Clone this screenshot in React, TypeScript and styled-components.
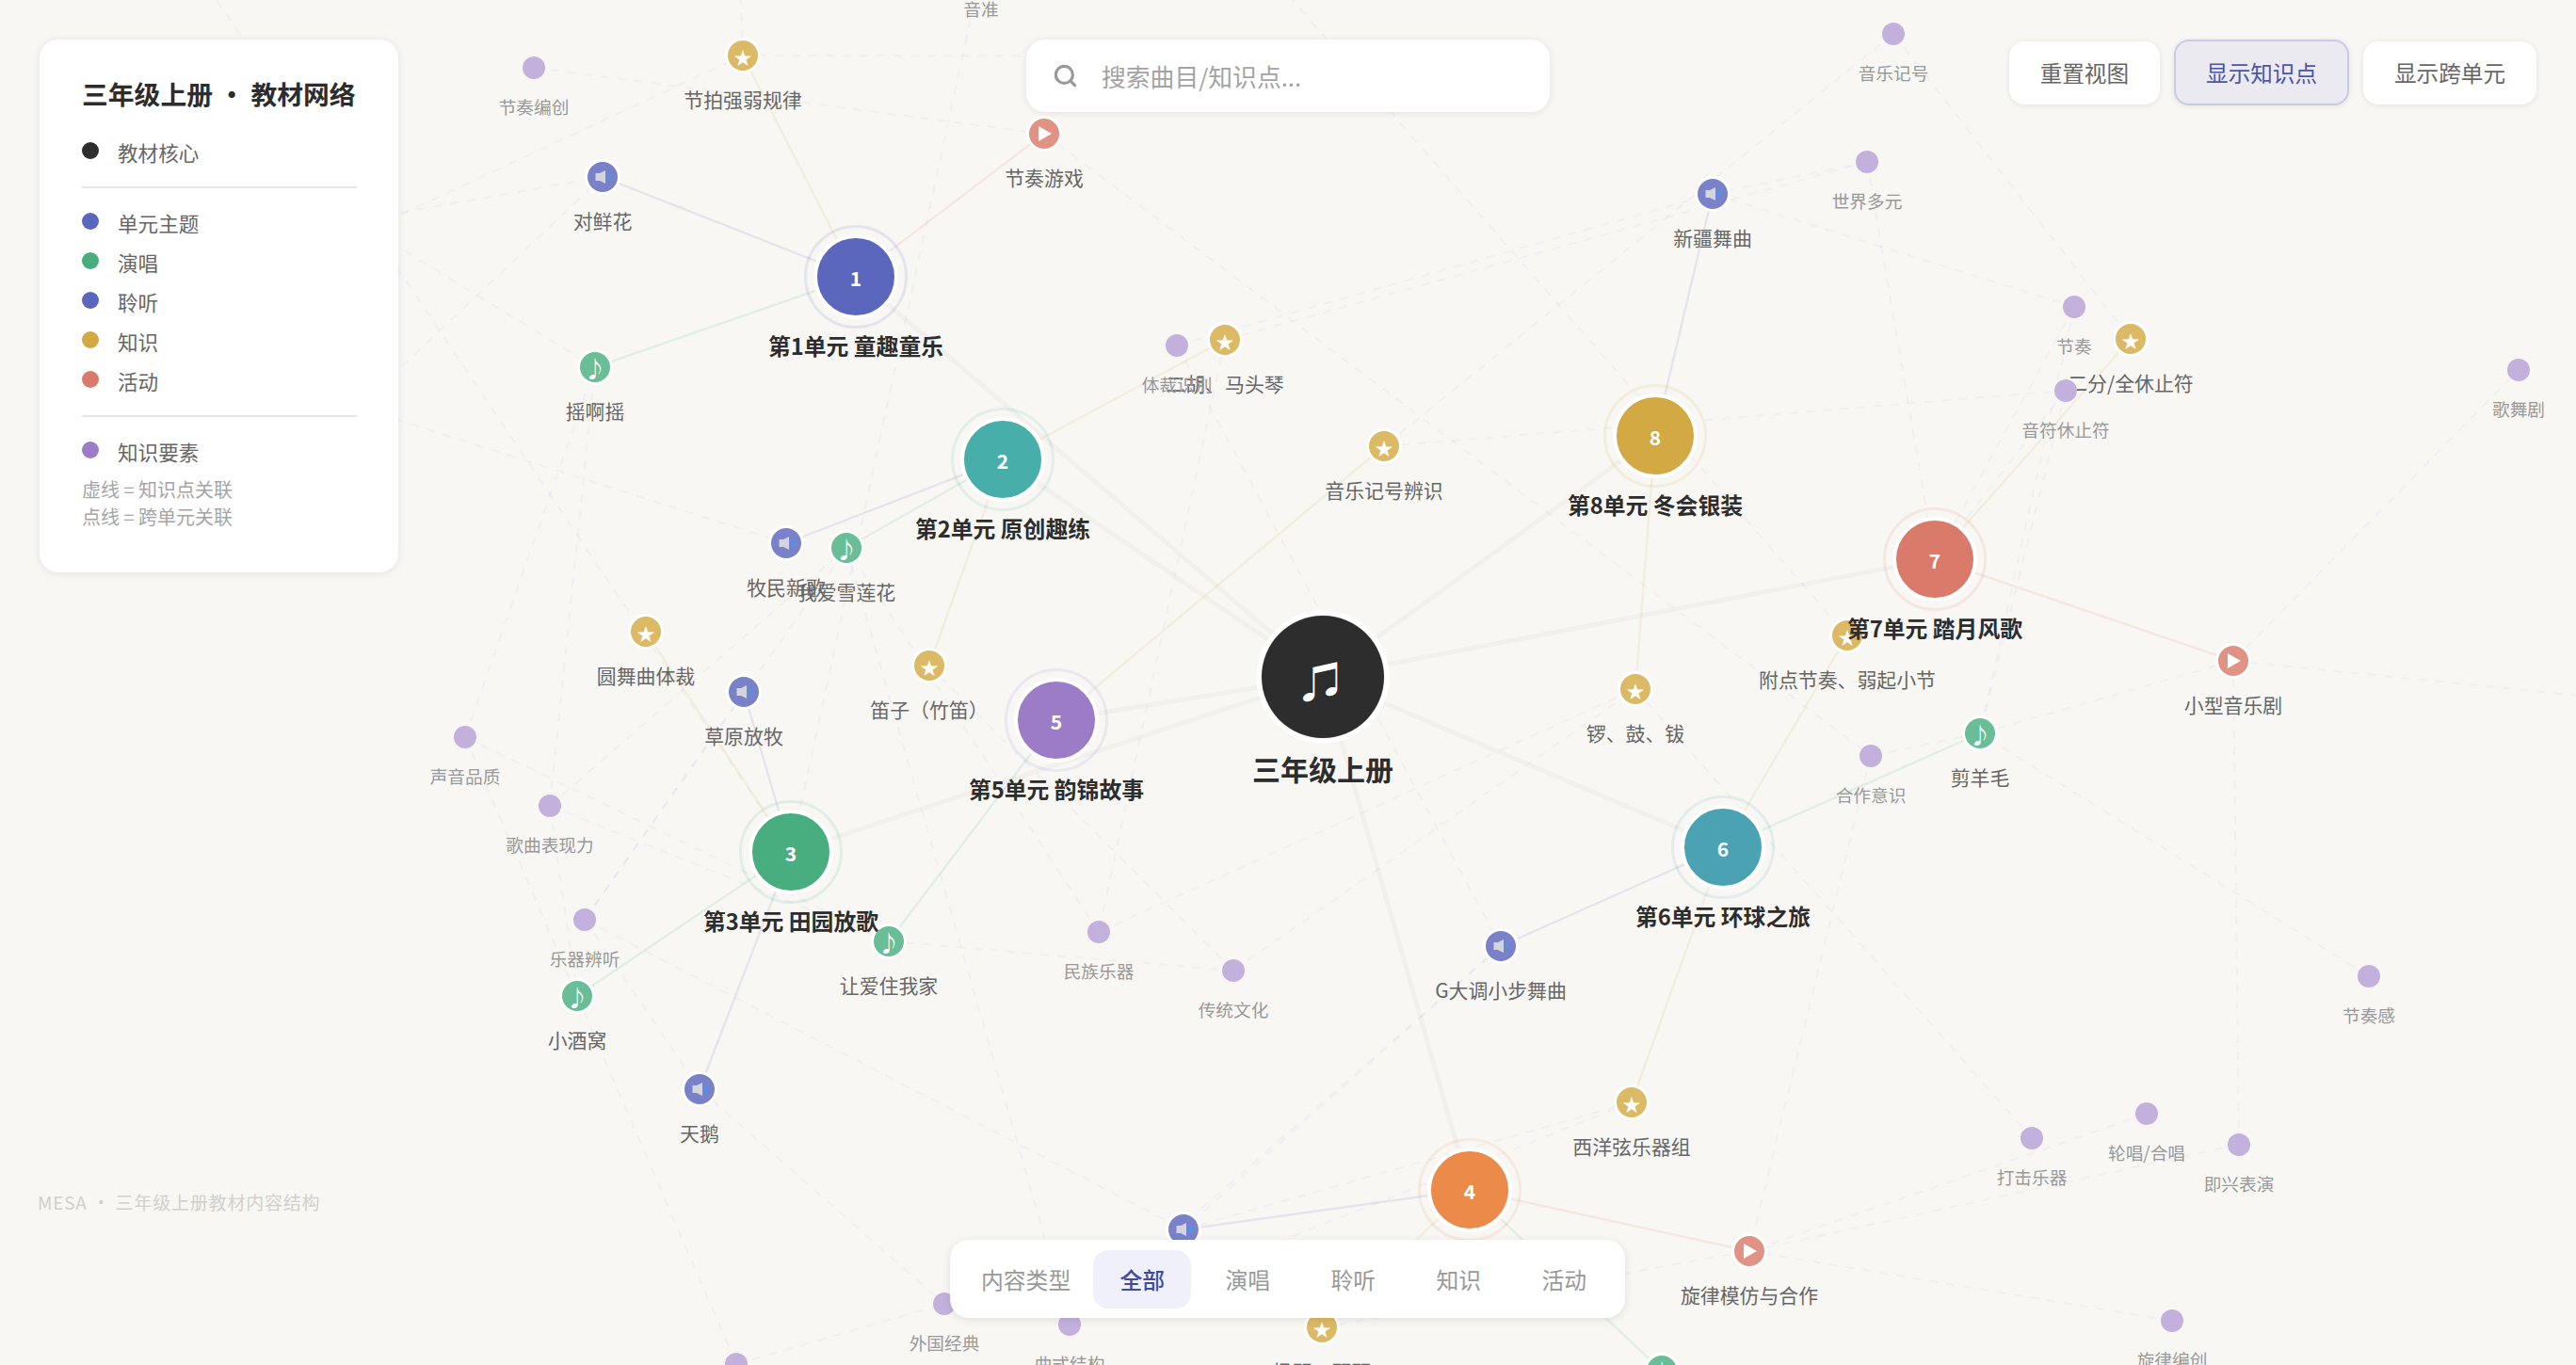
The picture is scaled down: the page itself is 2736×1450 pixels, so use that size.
import React from 'react';
import styled, { createGlobalStyle } from 'styled-components';
import { Search } from 'lucide-react';

type Kind = 'audio' | 'note' | 'star' | 'play' | 'idea';

interface Leaf {
  id: string;
  label?: string;
  x: number;
  y: number;
  kind: Kind;
  unit?: number;
}

const FONT = `"Noto Sans CJK SC", "Noto Sans", sans-serif`;

const CORE = { x: 1405, y: 719 };

const UNITS = [
  { n: 1, label: '第1单元 童趣童乐', x: 909, y: 294, color: '#5b67bd' },
  { n: 2, label: '第2单元 原创趣练', x: 1065, y: 488, color: '#48aeaa' },
  { n: 3, label: '第3单元 田园放歌', x: 840, y: 905, color: '#48ae80' },
  { n: 4, label: '第4单元', x: 1561, y: 1264, color: '#ec8a4a' },
  { n: 5, label: '第5单元 韵锦故事', x: 1122, y: 765, color: '#9c7cc6' },
  { n: 6, label: '第6单元 环球之旅', x: 1830, y: 900, color: '#4ba2b2' },
  { n: 7, label: '第7单元 踏月风歌', x: 2055, y: 594, color: '#d97a6a' },
  { n: 8, label: '第8单元 冬会银装', x: 1758, y: 463, color: '#d3a943' },
];

const KIND_COLOR: Record<Kind, string> = {
  audio: '#5b67bd',
  note: '#48ae80',
  star: '#d3a943',
  play: '#d97a6a',
  idea: '#9c7cc6',
};

const LEAVES: Leaf[] = [
  { id: 'duixianhua', label: '对鲜花', x: 640, y: 188, kind: 'audio', unit: 1 },
  { id: 'yaoayao', label: '摇啊摇', x: 632, y: 390, kind: 'note', unit: 1 },
  { id: 'jiepai', label: '节拍强弱规律', x: 789, y: 59, kind: 'star', unit: 1 },
  { id: 'jzgame', label: '节奏游戏', x: 1109, y: 142, kind: 'play', unit: 1 },
  { id: 'mumin', label: '牧民新歌', x: 835, y: 577, kind: 'audio', unit: 2 },
  { id: 'xuelian', label: '我爱雪莲花', x: 899, y: 582, kind: 'note', unit: 2 },
  { id: 'erhu', label: '二胡、马头琴', x: 1301, y: 361, kind: 'star', unit: 2 },
  { id: 'dizi', label: '笛子（竹笛）', x: 987, y: 707, kind: 'star', unit: 2 },
  { id: 'caoyuan', label: '草原放牧', x: 790, y: 735, kind: 'audio', unit: 3 },
  { id: 'xiaojiuwo', label: '小酒窝', x: 613, y: 1058, kind: 'note', unit: 3 },
  { id: 'tiane', label: '天鹅', x: 743, y: 1157, kind: 'audio', unit: 3 },
  { id: 'yuanwu', label: '圆舞曲体裁', x: 686, y: 671, kind: 'star', unit: 3 },
  { id: 'rangai', label: '让爱住我家', x: 944, y: 1000, kind: 'note', unit: 5 },
  { id: 'jihao', label: '音乐记号辨识', x: 1470, y: 474, kind: 'star', unit: 5 },
  { id: 'xinjiang', label: '新疆舞曲', x: 1819, y: 206, kind: 'audio', unit: 8 },
  { id: 'luogu', label: '锣、鼓、钹', x: 1737, y: 732, kind: 'star', unit: 8 },
  { id: 'erfen', label: '二分/全休止符', x: 2263, y: 360, kind: 'star', unit: 7 },
  { id: 'musical', label: '小型音乐剧', x: 2372, y: 702, kind: 'play', unit: 7 },
  { id: 'fudian', label: '附点节奏、弱起小节', x: 1962, y: 675, kind: 'star', unit: 6 },
  { id: 'jianyang', label: '剪羊毛', x: 2103, y: 779, kind: 'note', unit: 6 },
  { id: 'gmajor', label: 'G大调小步舞曲', x: 1594, y: 1005, kind: 'audio', unit: 6 },
  { id: 'xiyang', label: '西洋弦乐器组', x: 1733, y: 1171, kind: 'star', unit: 6 },
  { id: 'bottomaudio', x: 1257, y: 1306, kind: 'audio', unit: 4 },
  { id: 'yangqin', label: '扬琴、琵琶', x: 1404, y: 1410, kind: 'star', unit: 4 },
  { id: 'xuanlv', label: '旋律模仿与合作', x: 1858, y: 1329, kind: 'play', unit: 4 },
  { id: 'bottomnote', x: 1765, y: 1456, kind: 'note', unit: 4 },

  { id: 'bianchuang', label: '节奏编创', x: 567, y: 72, kind: 'idea' },
  { id: 'yinzhun', label: '音准', x: 1042, y: -32, kind: 'idea' },
  { id: 'ticai', label: '体裁识别', x: 1250, y: 367, kind: 'idea' },
  { id: 'jihaoidea', label: '音乐记号', x: 2011, y: 36, kind: 'idea' },
  { id: 'shijie', label: '世界多元', x: 1983, y: 172, kind: 'idea' },
  { id: 'jiezou', label: '节奏', x: 2203, y: 326, kind: 'idea' },
  { id: 'yinfu', label: '音符休止符', x: 2194, y: 415, kind: 'idea' },
  { id: 'gewu', label: '歌舞剧', x: 2675, y: 393, kind: 'idea' },
  { id: 'shengyin', label: '声音品质', x: 494, y: 783, kind: 'idea' },
  { id: 'biaoxian', label: '歌曲表现力', x: 584, y: 856, kind: 'idea' },
  { id: 'bianting', label: '乐器辨听', x: 621, y: 977, kind: 'idea' },
  { id: 'minzu', label: '民族乐器', x: 1167, y: 990, kind: 'idea' },
  { id: 'chuantong', label: '传统文化', x: 1310, y: 1031, kind: 'idea' },
  { id: 'hezuo', label: '合作意识', x: 1987, y: 803, kind: 'idea' },
  { id: 'jiezougan', label: '节奏感', x: 2516, y: 1037, kind: 'idea' },
  { id: 'daji', label: '打击乐器', x: 2158, y: 1209, kind: 'idea' },
  { id: 'lunchang', label: '轮唱/合唱', x: 2280, y: 1183, kind: 'idea' },
  { id: 'jixing', label: '即兴表演', x: 2378, y: 1216, kind: 'idea' },
  { id: 'bianchuang2', label: '旋律编创', x: 2307, y: 1403, kind: 'idea' },
  { id: 'waiguo', label: '外国经典', x: 1003, y: 1385, kind: 'idea' },
  { id: 'qushi', label: '曲式结构', x: 1136, y: 1407, kind: 'idea' },
  { id: 'bottomidea', x: 782, y: 1449, kind: 'idea' },
];

// 跑到面板、搜索框或画布外面的知识点连线
const ANCHORS: Record<string, [number, number]> = {
  a1: [230, 319],
  a2: [230, 260],
  a3: [230, 575],
  a4: [230, 145],
  a5: [230, 385],
  a6: [230, 0],
  a7: [1345, -32],
  a8: [785, -40],
  a9: [1300, 60],
  a10: [2900, 755],
};

const DASHED: [string, string][] = [
  ['bianchuang', 'jzgame'],
  ['a1', 'jiepai'],
  ['a2', 'duixianhua'],
  ['a3', 'duixianhua'],
  ['a4', 'yaoayao'],
  ['a5', 'mumin'],
  ['a6', 'u3'],
  ['a7', 'fudian'],
  ['a8', 'jiepai'],
  ['a9', 'jiepai'],
  ['a10', 'musical'],
  ['yinzhun', 'u3'],
  ['xinjiang', 'jiezou'],
  ['jiezou', 'u7'],
  ['jiezou', 'jianyang'],
  ['jihaoidea', 'erfen'],
  ['jihaoidea', 'jihao'],
  ['shijie', 'xinjiang'],
  ['erhu', 'shijie'],
  ['ticai', 'xinjiang'],
  ['shijie', 'u7'],
  ['jihao', 'yinfu'],
  ['yinfu', 'u7'],
  ['yinfu', 'jianyang'],
  ['hezuo', 'jianyang'],
  ['hezuo', 'xuanlv'],
  ['jzgame', 'hezuo'],
  ['jiezougan', 'jianyang'],
  ['jixing', 'musical'],
  ['jixing', 'xuanlv'],
  ['lunchang', 'xuanlv'],
  ['luogu', 'daji'],
  ['bianchuang2', 'xuanlv'],
  ['musical', 'jianyang'],
  ['musical', 'gewu'],
  ['erhu', 'minzu'],
  ['ticai', 'gmajor'],
  ['minzu', 'luogu'],
  ['rangai', 'chuantong'],
  ['minzu', 'xuelian'],
  ['chuantong', 'dizi'],
  ['chuantong', 'luogu'],
  ['shengyin', 'yaoayao'],
  ['shengyin', 'rangai'],
  ['shengyin', 'xiaojiuwo'],
  ['biaoxian', 'yaoayao'],
  ['biaoxian', 'xuelian'],
  ['biaoxian', 'xiaojiuwo'],
  ['biaoxian', 'rangai'],
  ['bianting', 'caoyuan'],
  ['bianting', 'xuelian'],
  ['bianting', 'bottomaudio'],
  ['bianting', 'tiane'],
  ['xiaojiuwo', 'bottomidea'],
  ['tiane', 'waiguo'],
  ['bottomidea', 'waiguo'],
  ['xiyang', 'bottomaudio'],
  ['xiyang', 'qushi'],
  ['gmajor', 'qushi'],
  ['gmajor', 'bottomaudio'],
  ['xuelian', 'qushi'],
  ['yangqin', 'xuanlv'],
];

const LEGEND_MAIN = [
  { label: '单元主题', color: '#5b67bd' },
  { label: '演唱', color: '#48ae80' },
  { label: '聆听', color: '#5b67bd' },
  { label: '知识', color: '#d3a943' },
  { label: '活动', color: '#d97a6a' },
];

const TABS = ['全部', '演唱', '聆听', '知识', '活动'];

function findPoint(id: string): [number, number] {
  if (ANCHORS[id]) return ANCHORS[id];
  if (id.startsWith('u')) {
    const unit = UNITS.find(u => `u${u.n}` === id);
    if (unit) return [unit.x, unit.y];
  }
  const leaf = LEAVES.find(l => l.id === id);
  return leaf ? [leaf.x, leaf.y] : [0, 0];
}

function LeafIcon({ node }: { node: Leaf }) {
  const { x, y, kind } = node;
  if (kind === 'audio') {
    // 小喇叭
    return (
      <g transform={`translate(${x - 7.5} ${y - 5.5})`}>
        <polygon points="0,1.5 4.5,1.5 10.5,-1.5 10.5,12.5 4.5,9.5 0,9.5" fill="#d4d4de" />
        <path d="M12 3 Q13.5 5.5 12 8" stroke="#3f9cf0" strokeWidth="1.3" fill="none" />
        <path d="M14 1 Q16.5 5.5 14 10" stroke="#3f9cf0" strokeWidth="1.3" fill="none" />
      </g>
    );
  }
  if (kind === 'note') return <LeafGlyph x={x} y={y} $size={24}>♪</LeafGlyph>;
  if (kind === 'star') return <LeafGlyph x={x} y={y + 1} $size={19}>★</LeafGlyph>;
  if (kind === 'play') return <polygon points={`${x - 6},${y - 8} ${x + 8},${y} ${x - 6},${y + 8}`} fill="#fff" />;
  return null;
}

export default function App() {
  return (
    <Stage>
      <GlobalStyle />
      <GraphCanvas viewBox="0 0 2736 1450">
        {UNITS.map(u => (
          <CoreEdge key={u.n} x1={CORE.x} y1={CORE.y} x2={u.x} y2={u.y} />
        ))}
        {DASHED.map(([from, to]) => {
          const [x1, y1] = findPoint(from);
          const [x2, y2] = findPoint(to);
          return <DashedEdge key={`${from}-${to}`} x1={x1} y1={y1} x2={x2} y2={y2} />;
        })}
        {LEAVES.filter(l => l.unit).map(l => {
          const unit = UNITS.find(u => u.n === l.unit)!;
          return <UnitEdge key={l.id} x1={unit.x} y1={unit.y} x2={l.x} y2={l.y} stroke={KIND_COLOR[l.kind]} />;
        })}

        {LEAVES.map(l => (
          <g key={l.id}>
            <LeafHalo cx={l.x} cy={l.y} r={l.kind === 'idea' ? 12 : 19} />
            <LeafDot cx={l.x} cy={l.y} r={l.kind === 'idea' ? 12 : 16} $kind={l.kind} />
            <LeafIcon node={l} />
            {l.label && (
              <LeafLabel x={l.x} y={l.y + (l.kind === 'idea' ? 40 : 46)} $idea={l.kind === 'idea'}>
                {l.label}
              </LeafLabel>
            )}
          </g>
        ))}

        {UNITS.map(u => (
          <g key={u.n}>
            <UnitRing cx={u.x} cy={u.y} r={53.5} stroke={u.color} />
            <UnitDisc cx={u.x} cy={u.y} r={44} fill={u.color} />
            <UnitNumber x={u.x} y={u.y + 1}>{u.n}</UnitNumber>
            <UnitLabel x={u.x} y={u.y + 72}>{u.label}</UnitLabel>
          </g>
        ))}

        <CoreDisc cx={CORE.x} cy={CORE.y} r={68} />
        <CoreInner cx={CORE.x} cy={CORE.y} r={65} />
        <CoreGlyph x={CORE.x} y={CORE.y + 3}>♫</CoreGlyph>
        <CoreLabel x={CORE.x} y={CORE.y + 97}>三年级上册</CoreLabel>
      </GraphCanvas>

      <LegendPanel>
        <LegendTitle>三年级上册 · 教材网络</LegendTitle>
        <LegendRow>
          <LegendDot $color="#2d2d2d" />
          教材核心
        </LegendRow>
        <LegendRule />
        {LEGEND_MAIN.map(item => (
          <LegendRow key={item.label}>
            <LegendDot $color={item.color} />
            {item.label}
          </LegendRow>
        ))}
        <LegendRule />
        <LegendRow>
          <LegendDot $color="#9c7cc6" />
          知识要素
        </LegendRow>
        <LegendNote>
          虚线 = 知识点关联
          <br />
          点线 = 跨单元关联
        </LegendNote>
      </LegendPanel>

      <SearchBox>
        <Search size={27} color="#999" strokeWidth={2.8} />
        <SearchInput placeholder="搜索曲目/知识点..." readOnly />
      </SearchBox>

      <ActionBar>
        <ActionButton>重置视图</ActionButton>
        <ActionButton $active>显示知识点</ActionButton>
        <ActionButton>显示跨单元</ActionButton>
      </ActionBar>

      <FilterBar>
        <FilterCaption>内容类型</FilterCaption>
        {TABS.map((tab, i) => (
          <FilterTab key={tab} $active={i === 0}>
            {tab}
          </FilterTab>
        ))}
      </FilterBar>

      <Footnote>MESA · 三年级上册教材内容结构</Footnote>
    </Stage>
  );
}

const GlobalStyle = createGlobalStyle`
  html, body {
    margin: 0;
    padding: 0;
    background: #f8f7f4;
  }
`;

const Stage = styled.div`
  position: relative;
  width: 2736px;
  height: 1450px;
  overflow: hidden;
  background: #f8f7f4;
  font-family: ${FONT};
`;

/*
 ** 网络图
 */
const GraphCanvas = styled.svg`
  position: absolute;
  inset: 0;
  width: 2736px;
  height: 1450px;
  font-family: ${FONT};
`;

const CoreEdge = styled.line`
  stroke: #2d2d2d;
  stroke-opacity: 0.035;
  stroke-width: 5;
`;

const UnitEdge = styled.line`
  stroke-opacity: 0.13;
  stroke-width: 2.4;
`;

const DashedEdge = styled.line`
  stroke: #5b67bd;
  stroke-opacity: 0.05;
  stroke-width: 2;
  stroke-dasharray: 9 9;
`;

const LeafHalo = styled.circle`
  fill: #fff;
`;

const LeafDot = styled.circle<{ $kind: Kind }>`
  fill: ${props => KIND_COLOR[props.$kind]};
  fill-opacity: ${props => (props.$kind === 'idea' ? 0.6 : 0.82)};
  stroke: none;
`;

const LeafGlyph = styled.text<{ $size: number }>`
  fill: #fff;
  font-size: ${props => props.$size}px;
  text-anchor: middle;
  dominant-baseline: central;
`;

const LeafLabel = styled.text<{ $idea: boolean }>`
  fill: ${props => (props.$idea ? '#999' : '#666')};
  font-size: ${props => (props.$idea ? 18.7 : 20.9)}px;
  text-anchor: middle;
  dominant-baseline: central;
`;

const UnitRing = styled.circle`
  fill: none;
  stroke-opacity: 0.13;
  stroke-width: 3;
`;

const UnitDisc = styled.circle`
  stroke: #fff;
  stroke-width: 4;
  r: 43;
`;

const UnitNumber = styled.text`
  fill: #fff;
  font-size: 21px;
  font-weight: 700;
  text-anchor: middle;
  dominant-baseline: central;
`;

const UnitLabel = styled.text`
  fill: #2d2d2d;
  font-size: 23.8px;
  font-weight: 700;
  text-anchor: middle;
  dominant-baseline: central;
`;

const CoreDisc = styled.circle`
  fill: #e6e6e6;
  stroke: #fff;
  stroke-width: 5;
`;

const CoreInner = styled.circle`
  fill: #2d2d2d;
`;

const CoreGlyph = styled.text`
  fill: #fff;
  font-size: 44px;
  text-anchor: middle;
  dominant-baseline: central;
`;

const CoreLabel = styled.text`
  fill: #2d2d2d;
  font-size: 30px;
  font-weight: 700;
  text-anchor: middle;
  dominant-baseline: central;
`;

/*
 ** 图例
 */
const LegendPanel = styled.aside`
  position: absolute;
  left: 42px;
  top: 42px;
  box-sizing: border-box;
  width: 381px;
  height: 566px;
  padding: 35px 44px 0 45px;
  background: #fff;
  border-radius: 20px;
  box-shadow: 0 1px 8px rgba(0, 0, 0, 0.09);
`;

const LegendTitle = styled.div`
  font-size: 27.8px;
  line-height: 45px;
  font-weight: 700;
  color: #2d2d2d;
  white-space: nowrap;
  margin-bottom: 18px;
`;

const LegendRow = styled.div`
  display: flex;
  align-items: center;
  gap: 20px;
  height: 42px;
  font-size: 21.6px;
  color: #666;
`;

const LegendDot = styled.span<{ $color: string }>`
  width: 18px;
  height: 18px;
  border-radius: 50%;
  background: ${props => props.$color};
  transform: translateY(-1px);
`;

const LegendRule = styled.div`
  height: 2px;
  background: #e9e7e3;
  margin: 16px 0 15px;
`;

const LegendNote = styled.div`
  margin-top: 5px;
  font-size: 20px;
  line-height: 29px;
  color: #a5a5a5;
`;

/*
 ** 搜索框
 */
const SearchBox = styled.div`
  position: absolute;
  left: 1090px;
  top: 42px;
  box-sizing: border-box;
  width: 556px;
  height: 77px;
  display: flex;
  align-items: center;
  gap: 25px;
  padding: 0 28px;
  background: #fff;
  border-radius: 20px;
  box-shadow: 0 1px 8px rgba(0, 0, 0, 0.09);
`;

const SearchInput = styled.input`
  flex: 1;
  min-width: 0;
  border: none;
  outline: none;
  background: none;
  padding: 0;
  font-family: ${FONT};
  font-size: 25.8px;
  color: #666;

  &::placeholder {
    color: #a3a3a3;
  }
`;

/*
 ** 右上角按钮
 */
const ActionBar = styled.div`
  position: absolute;
  right: 42px;
  top: 42px;
  display: flex;
  align-items: center;
  gap: 15px;
`;

const ActionButton = styled.button<{ $active?: boolean }>`
  box-sizing: border-box;
  height: ${props => (props.$active ? 70 : 67)}px;
  padding: 0 ${props => (props.$active ? 32 : 33)}px;
  border: ${props => (props.$active ? '2px solid #c7cbe8' : 'none')};
  border-radius: 16px;
  background: ${props => (props.$active ? '#ebeaf0' : '#fff')};
  color: ${props => (props.$active ? '#4b55a9' : '#666')};
  font-family: ${FONT};
  font-size: 23.6px;
  box-shadow: 0 1px 6px rgba(0, 0, 0, 0.09);
`;

/*
 ** 类型筛选
 */
const FilterBar = styled.div`
  position: absolute;
  left: 1009px;
  top: 1317px;
  box-sizing: border-box;
  width: 717px;
  height: 83px;
  display: flex;
  align-items: center;
  gap: 8px;
  padding: 0 12px;
  background: #fff;
  border-radius: 20px;
  box-shadow: 0 2px 10px rgba(0, 0, 0, 0.1);
`;

const FilterCaption = styled.span`
  padding: 0 16px 0 21px;
  font-size: 23.8px;
  color: #999;
  white-space: nowrap;
`;

const FilterTab = styled.span<{ $active: boolean }>`
  width: 104px;
  height: 62px;
  display: flex;
  align-items: center;
  justify-content: center;
  border-radius: 16px;
  font-size: 23.8px;
  font-weight: ${props => (props.$active ? 500 : 400)};
  color: ${props => (props.$active ? '#3f4aa5' : '#999')};
  background: ${props => (props.$active ? '#f0f0fa' : 'transparent')};
`;

const Footnote = styled.div`
  position: absolute;
  left: 40px;
  top: 1262px;
  font-size: 19px;
  line-height: 30px;
  letter-spacing: 0.8px;
  color: #d0d0ce;
  white-space: nowrap;
`;
